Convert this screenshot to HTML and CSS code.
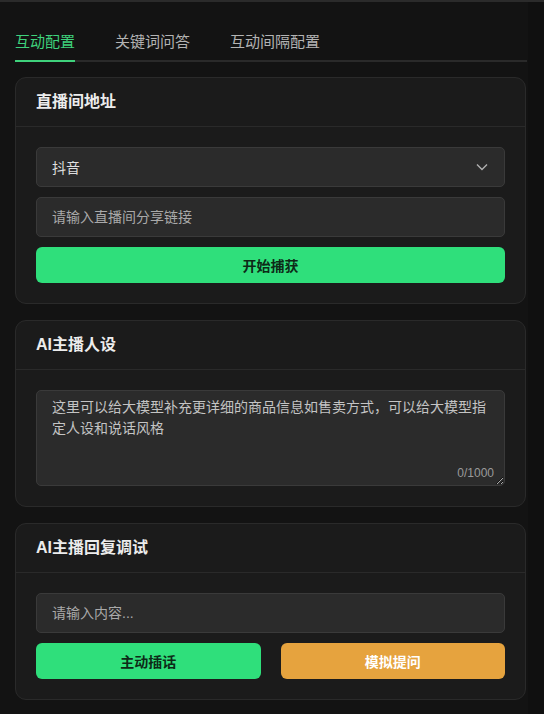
FILE: index.html
```html
<!DOCTYPE html>
<html lang="zh-CN">
<head>
<meta charset="utf-8">
<title>互动配置</title>
<link rel="stylesheet" href="styles.css">
</head>
<body>
<div class="topbar"></div>
<main class="page">
  <nav class="tabs">
    <span class="tab active">互动配置</span>
    <span class="tab">关键词问答</span>
    <span class="tab">互动间隔配置</span>
  </nav>

  <section class="card">
    <header class="card-head">直播间地址</header>
    <div class="card-body">
      <div class="field select">
        <span class="value">抖音</span>
        <svg class="chevron" width="12" height="8" viewBox="0 0 12 8"><path d="M1 1.5 L6 6.5 L11 1.5" fill="none" stroke="#b0b0b0" stroke-width="1.4"/></svg>
      </div>
      <input class="field" type="text" placeholder="请输入直播间分享链接">
      <button class="btn btn-green">开始捕获</button>
    </div>
  </section>

  <section class="card">
    <header class="card-head">AI主播人设</header>
    <div class="card-body">
      <div class="textarea-wrap">
        <textarea class="textarea" placeholder="这里可以给大模型补充更详细的商品信息如售卖方式，可以给大模型指定人设和说话风格"></textarea>
        <span class="counter">0/1000</span>
      </div>
    </div>
  </section>

  <section class="card">
    <header class="card-head">AI主播回复调试</header>
    <div class="card-body">
      <input class="field" type="text" placeholder="请输入内容...">
      <div class="btn-row">
        <button class="btn btn-green">主动插话</button>
        <button class="btn btn-orange">模拟提问</button>
      </div>
    </div>
  </section>
</main>
</body>
</html>
```

FILE: styles.css
```css
* { box-sizing: border-box; }

html, body {
  margin: 0;
  padding: 0;
  background: #101010;
  font-family: "Liberation Sans", "Noto Sans CJK SC", sans-serif;
  color: #e6e6e6;
}

.topbar {
  height: 2px;
  background: #2b2b2b;
}

.page {
  width: 528px;
  min-height: 712px;
  background: #131313;
  padding: 29px 1px 14px 15px;
}

.tabs {
  display: flex;
  gap: 40px;
  border-bottom: 2px solid #2a2a2a;
  margin-bottom: 15px;
}

.tab {
  position: relative;
  font-size: 15px;
  line-height: 22px;
  padding-bottom: 7px;
  color: #b3b3b3;
}

.tab.active {
  color: #3fd27c;
}

.tab.active::after {
  content: "";
  position: absolute;
  left: 0;
  right: 0;
  bottom: -2px;
  height: 2px;
  background: #3fd27c;
}

.card {
  width: 511px;
  background: #1b1b1b;
  border: 1px solid #2a2a2a;
  border-radius: 11px;
  margin-bottom: 16px;
}

.card-head {
  padding: 12px 20px;
  font-size: 16px;
  line-height: 24px;
  font-weight: bold;
  color: #ececec;
  border-bottom: 1px solid #2a2a2a;
}

.card-body {
  padding: 20px;
  display: flex;
  flex-direction: column;
  gap: 10px;
}

.field {
  display: block;
  width: 100%;
  height: 40px;
  background: #2b2b2b;
  border: 1px solid #3a3a3a;
  border-radius: 5px;
  padding: 0 15px;
  font-family: inherit;
  font-size: 14px;
  color: #dcdcdc;
  outline: none;
}

.field::placeholder {
  color: #a9a9a9;
}

.select {
  display: flex;
  align-items: center;
  justify-content: space-between;
}

.select .value {
  color: #dedede;
}

.chevron {
  margin-right: 1px;
}

.textarea-wrap {
  position: relative;
}

.textarea {
  display: block;
  width: 100%;
  height: 96px;
  background: #2b2b2b;
  border: 1px solid #3a3a3a;
  border-radius: 5px;
  padding: 6px 15px;
  font-family: inherit;
  font-size: 14px;
  line-height: 21px;
  color: #dcdcdc;
  resize: vertical;
  outline: none;
}

.textarea::placeholder {
  color: #c4c4c4;
}

.counter {
  position: absolute;
  right: 11px;
  bottom: 6px;
  font-size: 12px;
  line-height: 14px;
  color: #9a9a9a;
}

.btn {
  height: 36px;
  border: none;
  border-radius: 6px;
  font-family: inherit;
  font-size: 14px;
  font-weight: bold;
  cursor: pointer;
}

.btn-green {
  width: 100%;
  background: #2fdf7b;
  color: #0d2a17;
}

.btn-orange {
  background: #e6a33e;
  color: #ffffff;
}

.btn-row {
  display: grid;
  grid-template-columns: 1fr 1fr;
  gap: 20px;
}
```
